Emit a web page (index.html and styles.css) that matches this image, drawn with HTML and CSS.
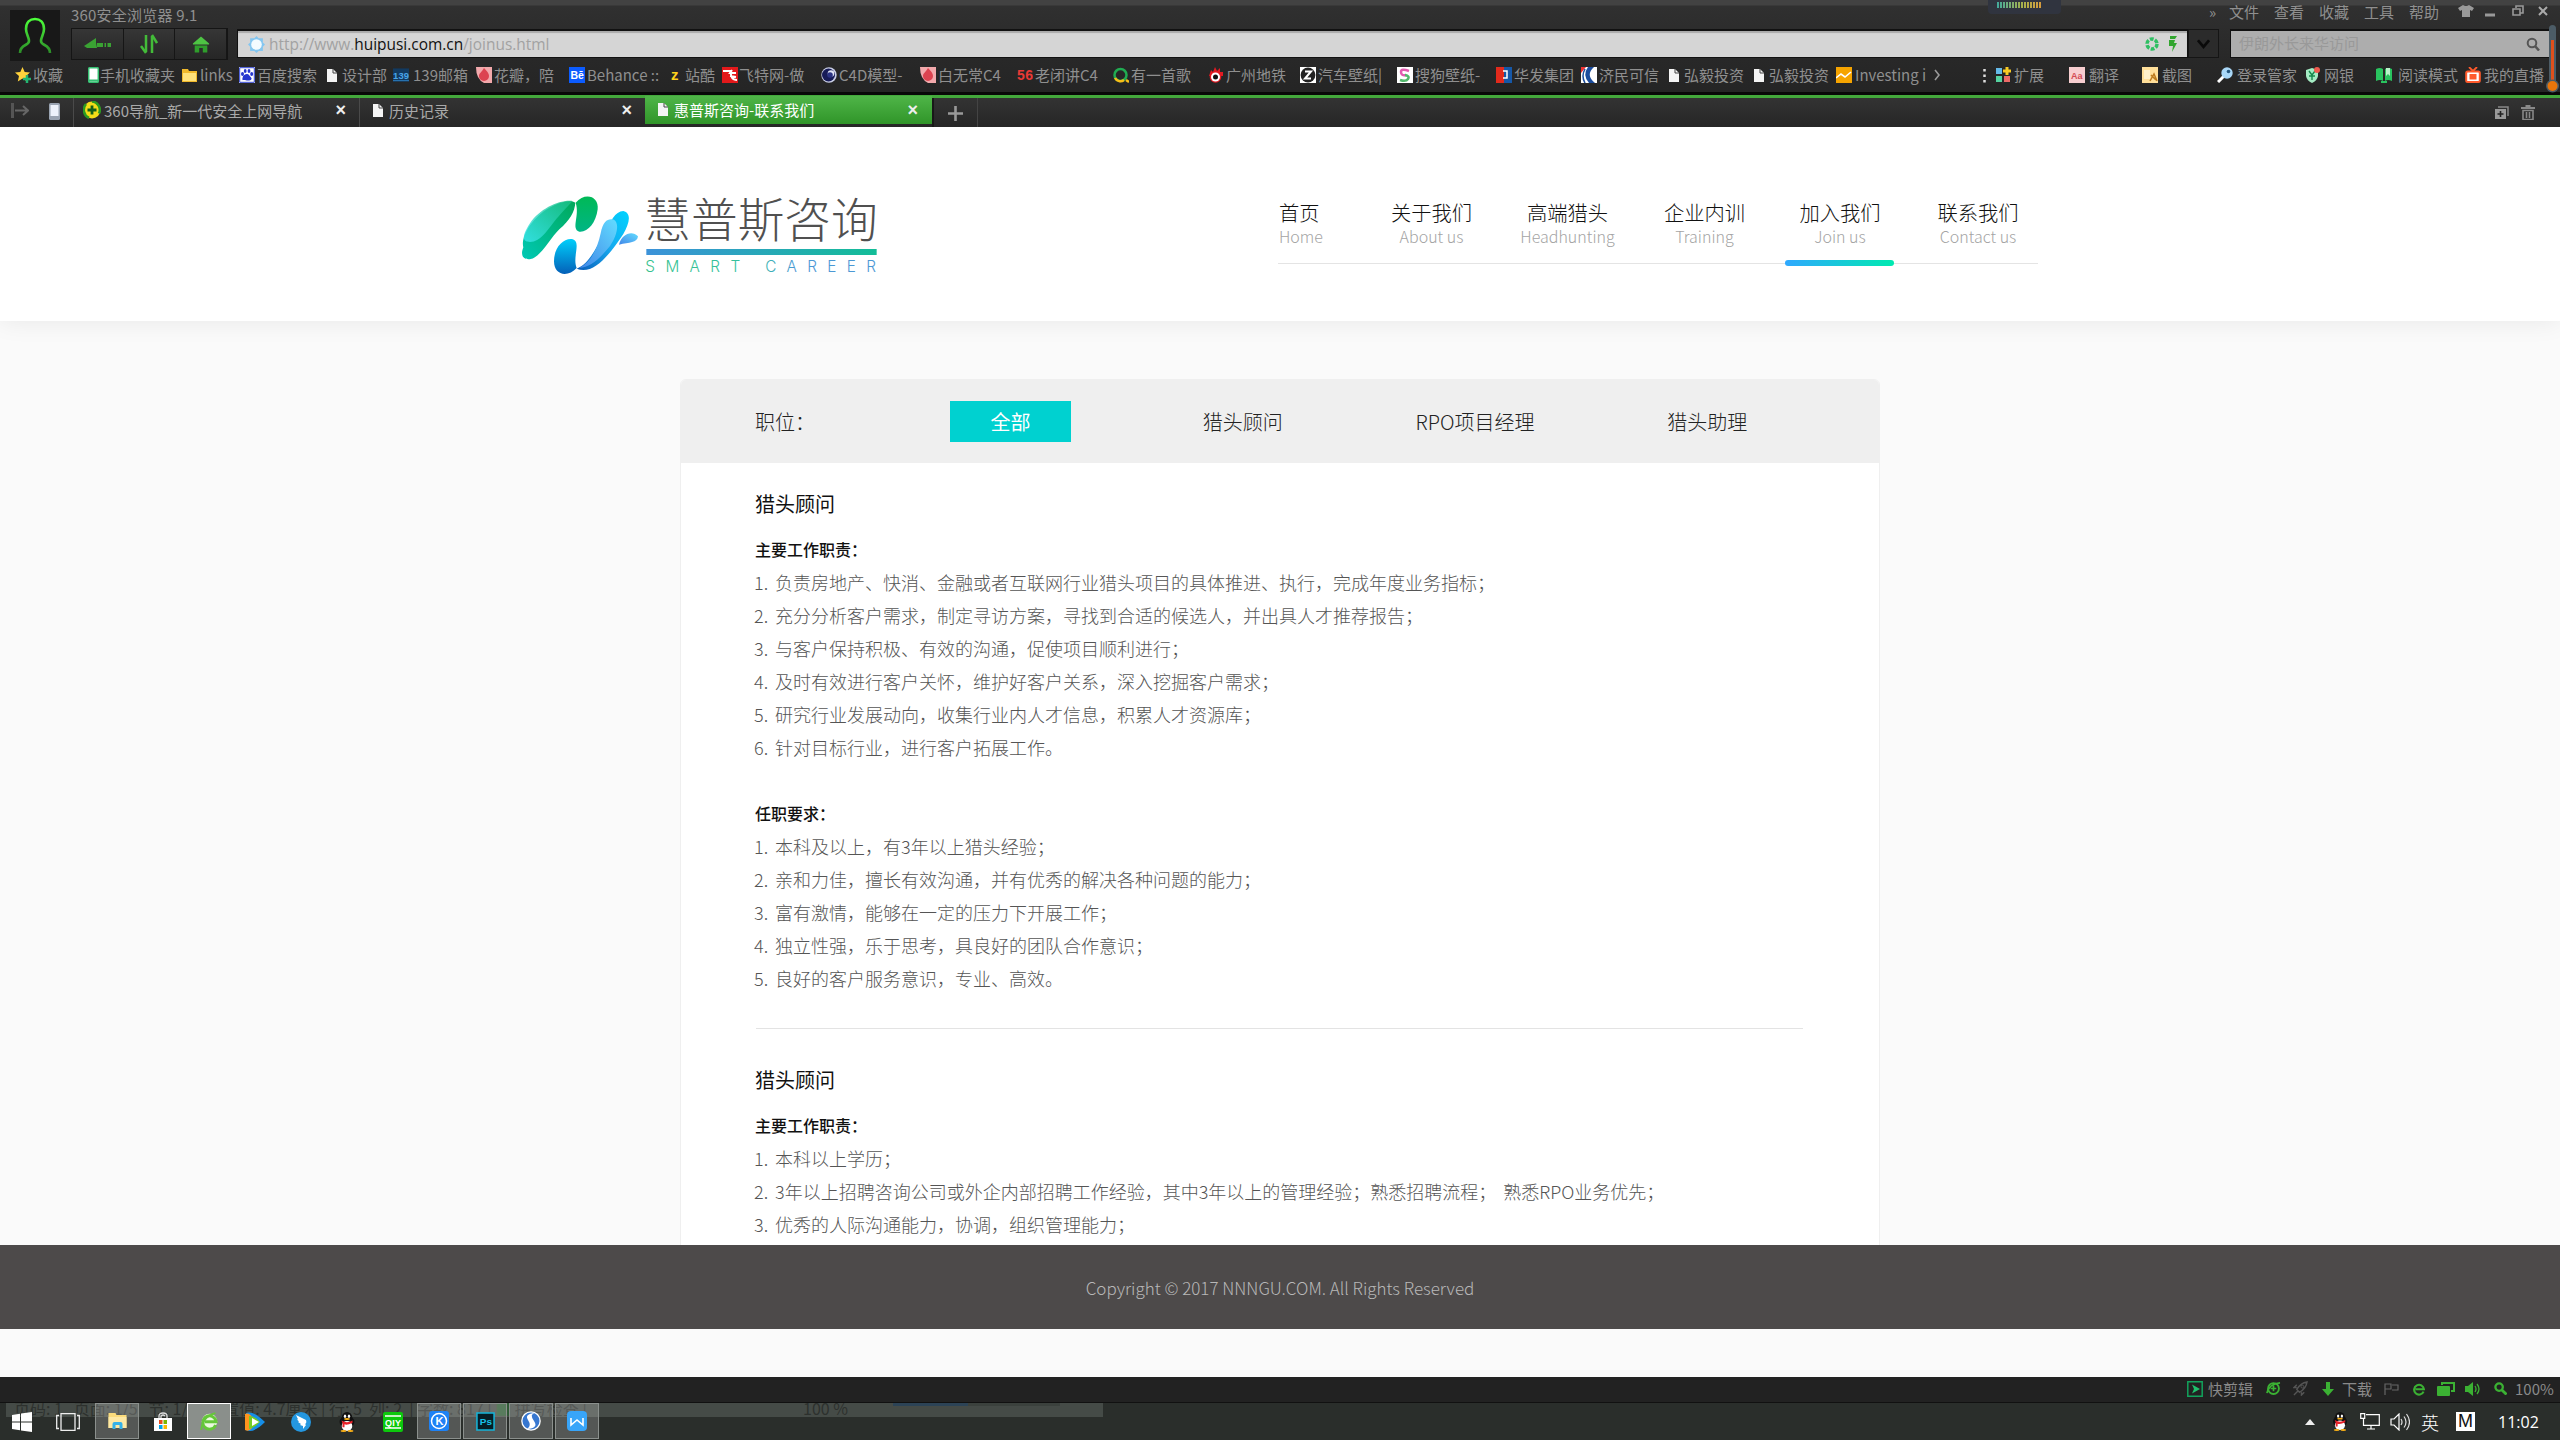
FILE: index.html
```html
<!DOCTYPE html>
<html lang="zh-CN">
<head>
<meta charset="utf-8">
<title>惠普斯咨询-联系我们</title>
<link rel="stylesheet" href="styles.css">
</head>
<body>
<svg class="defs" width="0" height="0">
  <defs>
    <symbol id="doc" viewBox="0 0 10 13"><path d="M0 0h6l4 4v9H0z" fill="#f4f4f4"/><path d="M6 0v4h4" fill="none" stroke="#444"/></symbol>
    <symbol id="qq" viewBox="0 0 16 20"><ellipse cx="8" cy="10" rx="7.4" ry="6.5" fill="#111"/><ellipse cx="8" cy="5.5" rx="5.2" ry="5.5" fill="#111"/><ellipse cx="8" cy="14" rx="5.3" ry="5" fill="#fff"/><ellipse cx="6" cy="4.3" rx="1.2" ry="1.7" fill="#fff"/><ellipse cx="10" cy="4.3" rx="1.2" ry="1.7" fill="#fff"/><ellipse cx="8" cy="7" rx="3" ry="1" fill="#fbb117"/><path d="M2.5 8.5Q8 12 13.5 8.5v2.3Q8 13.5 5.5 12.3v3H3.5v-4z" fill="#e8222a"/><ellipse cx="4.5" cy="19" rx="3" ry="1" fill="#fbb117"/><ellipse cx="11.5" cy="19" rx="3" ry="1" fill="#fbb117"/></symbol>
    <symbol id="petal" viewBox="0 0 16 16"><path d="M0 0h16v16H8Q0 12 0 0z" fill="#f2a9ac"/><path d="M8 1c4 4 5 6 5 8a5 5 0 0 1-10 0c0-3 3-4 5-8z" fill="#dc4350"/></symbol>
    <symbol id="ie" viewBox="0 0 16 16"><path d="M13.2 11A5.6 5.6 0 1 1 13.6 8.200H4" fill="none" stroke="currentColor" stroke-width="2.400"/></symbol>
    <linearGradient id="grn" x2="0" y2="1"><stop stop-color="#4cff3a"/><stop offset="1" stop-color="#2c8c28"/></linearGradient>
  </defs>
</svg>

<header class="chrome">
  <div class="chrome-top">
    <div class="avatar"><svg viewBox="0 0 50 50" width="50" height="50"><path d="M10 43c0-9 9-7 9-12 0-4-3-7-3-12 0-7 4-10 9-10s9 3 9 10c0 5-3 8-3 12 0 5 9 3 9 12" fill="none" stroke="url(#grn)" stroke-width="2.6"/></svg></div>
    <div class="chrome-rows">
      <div class="title-row">
        <span class="app-name">360安全浏览器 9.1</span>
        <div class="menu">
          <span>»</span><span>文件</span><span>查看</span><span>收藏</span><span>工具</span><span>帮助</span>
          <svg viewBox="0 0 16 12" width="16" height="12"><path d="M5 0q3 2 6 0l5 3-2 3-2-1v7H4V5L2 6 0 3z" fill="#999"/></svg>
          <svg viewBox="0 0 10 12" width="10" height="12"><path d="M0 10h10" stroke="#999" stroke-width="3"/></svg>
          <svg viewBox="0 0 12 12" width="12" height="12"><path d="M4 3V1h7v7H8M1 4h7v6H1z" fill="none" stroke="#999" stroke-width="1.6"/></svg>
          <svg viewBox="0 0 10 12" width="10" height="12"><path d="M1 2l8 8M9 2l-8 8" stroke="#aaa" stroke-width="2"/></svg>
        </div>
      </div>
      <div class="address-row">
        <div class="nav-buttons">
          <span><svg viewBox="0 0 28 16" width="28" height="16"><path d="M1 10L13 2v4.500l1 5.500H4z" fill="#3aa233"/><path d="M14 9h14" stroke="#3aa233" stroke-width="4" stroke-dasharray="6 1.500 1.500 1.500"/></svg></span>
          <span><svg viewBox="0 0 18 20" width="18" height="20"><path d="M6 1v17M12 19V2" stroke="#43bb39" stroke-width="2.500"/><path d="M1 12l5 7M12 1l5 8" stroke="#43bb39" stroke-width="2.500"/></svg></span>
          <span><svg viewBox="0 0 20 18" width="18" height="17"><path d="M10 0l9 8v1H1V8z" fill="#4ec444"/><path d="M3 10h14v8h-5v-5H8v5H3z" fill="#2f9d2c"/></svg></span>
        </div>
        <div class="address">
          <svg viewBox="0 0 16 16" width="17" height="17"><path d="M8 0l2 2h4v4l2 2-2 2v4h-4l-2 2-2-2H2v-4L0 8l2-2V2h4z" fill="#84c6f0"/><circle cx="8" cy="8" r="5" fill="#f3fbff"/></svg>
          <span class="url">http://www.<b>huipusi.com.cn</b>/joinus.html</span>
          <svg class="shutter" viewBox="0 0 14 14" width="14" height="14"><circle cx="7" cy="7" r="5" fill="none" stroke="#2fbf63" stroke-width="3.500" stroke-dasharray="3.800 1.400"/></svg>
          <svg viewBox="0 0 10 16" width="10" height="16"><path d="M2 0h7L7 3H2zM1 4h6L6 7h3L4 16l1-6H1z" fill="#31a52e"/></svg>
        </div>
        <div class="dropdown"><svg viewBox="0 0 14 10" width="13" height="10"><path d="M1 1l6 7 6-7" fill="none" stroke="#0a0a0a" stroke-width="3"/></svg></div>
        <div class="search"><span>伊朗外长来华访问</span><svg viewBox="0 0 14 14" width="14" height="14"><circle cx="6" cy="6" r="4.300" fill="none" stroke="#555" stroke-width="2"/><path d="M9 9l4 4.500" stroke="#555" stroke-width="2.500"/></svg></div>
      </div>
    </div>
  </div>

  <nav class="bookmarks">
    <a><svg viewBox="0 0 16 16"><path d="M7.500 0l2.200 5 5.300.5-4 3.500 1.200 5.500-4.700-3-4.700 3L4 9 0 5.500 5.300 5z" fill="#ffd23c"/><path d="M12 8v8M8 12h8" stroke="#22b573" stroke-width="2.500"/></svg>收藏</a>
    <a><svg class="w12" viewBox="0 0 12 16"><rect x=".7" y=".7" width="9.600" height="14.600" rx="1" fill="#fff" stroke="#35bf72" stroke-width="1.500"/><path d="M1 12.500h9v2H1z" fill="#35bf72"/></svg>手机收藏夹</a>
    <a><svg viewBox="0 0 16 16"><path d="M0 2h6l1 2h8v11H0z" fill="#f0b92c"/><path d="M1 6h13v8H1z" fill="#ffe27a"/></svg>links</a>
    <a><svg viewBox="0 0 16 16"><path d="M0 0h16v16H0z" fill="#fff"/><path d="M.7.7h14.600v14.600H.7z" fill="none" stroke="#2b3fd0"/><g fill="#2637cf"><ellipse cx="3.500" cy="7" rx="1.500" ry="2"/><ellipse cx="6.200" cy="4" rx="1.400" ry="2"/><ellipse cx="10" cy="4" rx="1.400" ry="2"/><ellipse cx="12.700" cy="7" rx="1.500" ry="2"/><path d="M8 7c2 0 2.500 2 4 3.500S12 14 8 13.500 3 14 3.500 11 6 7 8 7z"/></g></svg>百度搜索</a>
    <a><svg class="w15"><use href="#doc" width="10" height="13" y="2"/></svg>设计部</a>
    <a><svg class="w20" viewBox="0 0 17 16"><path d="M0 1h17v14H0z" fill="#123a60"/><text x="0" y="12" class="ic" font-size="10" textLength="17" fill="#4aa5e8">139</text><path d="M0 14h17" stroke="#2f7fc0"/></svg>139邮箱</a>
    <a><svg viewBox="0 0 16 16"><use href="#petal"/></svg>花瓣，陪</a>
    <a><svg viewBox="0 0 16 16"><path d="M0 0h16v16H0z" fill="#0c5cff"/><text x="1.500" y="12" class="ic" font-size="10.500" fill="#fff">Bē</text></svg>Behance ::</a>
    <a><svg class="w15" viewBox="0 0 12 16"><text x="1" y="13" class="ic" font-size="15" fill="#ffd21c">z</text></svg>站酷</a>
    <a><svg class="w17" viewBox="0 0 16 16"><path d="M0 0h16v16H0z" fill="#e3191b"/><path d="M1 4h8q-1 9 6 9M10 3l-2 3h6M8 9l6 1" fill="none" stroke="#fff" stroke-width="2"/></svg>飞特网-做</a>
    <a><svg viewBox="0 0 16 16"><circle cx="8" cy="8" r="7.700" fill="#c9cee6"/><circle cx="7.500" cy="8" r="6.500" fill="#171c58"/><circle cx="10" cy="6.500" r="3.300" fill="#dfe3f5"/><circle cx="9" cy="8" r="2.800" fill="#2b3383"/></svg>C4D模型-</a>
    <a><svg viewBox="0 0 16 16"><use href="#petal"/></svg>白无常C4</a>
    <a><svg viewBox="0 0 16 16"><text x="0" y="13" class="ic" font-size="14" textLength="16" fill="#e83a36">56</text></svg>老闭讲C4</a>
    <a><svg viewBox="0 0 16 16"><circle cx="7.500" cy="8" r="6" fill="none" stroke="#20ac52" stroke-width="2.500"/><path d="M2 11a6 6 0 0 0 9 2M13 13l3 2" fill="none" stroke="#f8be17" stroke-width="2.500"/></svg>有一首歌</a>
    <a><svg viewBox="0 0 16 16"><path d="M2 6l1-3 2 2 2-5 2 4 3-3v4l3 0v4H1z" fill="#e31a22"/><circle cx="7.500" cy="10" r="5.800" fill="#e31a22"/><circle cx="7.500" cy="10" r="4.500" fill="#fff"/><circle cx="7.500" cy="10" r="2.500" fill="#111"/></svg>广州地铁</a>
    <a><svg viewBox="0 0 16 16"><path d="M0 0h16v16H0z" fill="#fff"/><circle cx="8" cy="8" r="7.400" fill="#222"/><path d="M5 4.500h6l-6 7h6" fill="none" stroke="#fff" stroke-width="2"/></svg>汽车壁纸|</a>
    <a><svg viewBox="0 0 16 16"><path d="M0 0h16v16H0z" fill="#fff"/><path d="M12 4Q4 1 4 5t5 3" fill="none" stroke="#e35bb0" stroke-width="2.500"/><path d="M8 8q5 1 3 4t-8 1" fill="none" stroke="#52b76b" stroke-width="2.500"/></svg>搜狗壁纸-</a>
    <a><svg viewBox="0 0 16 16"><path d="M0 0h8v16H0z" fill="#e22a1c"/><path d="M8 0h8v16H8z" fill="#1658a8"/><path d="M7 4h4v7H7" stroke="#fff" stroke-width="1.500" fill="none"/></svg>华发集团</a>
    <a><svg viewBox="0 0 16 16"><path d="M0 0h16v16H0z" fill="#fff"/><path d="M13 0Q4 8 14 16H8Q1 8 7 0z" fill="#1b4c9d"/><path d="M0 0h5L0 6z" fill="#e33"/><path d="M4 2Q0 9 4 16" stroke="#1b4c9d" fill="none" stroke-width="1.500"/></svg>济民可信</a>
    <a><svg class="w15"><use href="#doc" width="10" height="13" y="2"/></svg>弘毅投资</a>
    <a><svg class="w15"><use href="#doc" width="10" height="13" y="2"/></svg>弘毅投资</a>
    <a><svg class="w19" viewBox="0 0 16 16"><path d="M0 0h16v16H0z" fill="#f6a400"/><path d="M0 11l5-4 4 3 6-5" fill="none" stroke="#fff" stroke-width="1.600"/></svg>Investing i</a>
    <a><svg viewBox="0 0 16 16"><path d="M1 3l4 5-4 5" fill="none" stroke="#999" stroke-width="1.600"/></svg></a>
    <a><svg class="w12" viewBox="0 0 12 16"><path d="M1.500 2v14" stroke="#ddd" stroke-width="2.500" stroke-dasharray="2.500 3"/></svg></a>
    <a><svg class="w19" viewBox="0 0 16 16"><path d="M1 1h6v6H1z" fill="#64b9e8"/><path d="M1 9h6v6H1z" fill="#55d2a0"/><path d="M9 9h6v6H9z" fill="#ec6a67"/><path d="M12 0v8M8 4h8" stroke="#f8ca25" stroke-width="3"/></svg>扩展</a>
    <a><svg class="w20" viewBox="0 0 16 16"><path d="M0 0h16v16H0z" fill="#f7ced0"/><text x="2" y="11.500" font-size="9" class="ic" fill="#d44c54">Aa</text></svg>翻译</a>
    <a><svg class="w20" viewBox="0 0 16 16"><path d="M0 0h16v16H0z" fill="#ffdf9a"/><path d="M2 3h6v9H2z" fill="#fff0cb"/><path d="M8 14l4-7 3 7M9 8l5 5" stroke="#bd7b1e" stroke-width="1.500" fill="none"/></svg>截图</a>
    <a><svg class="w20" viewBox="0 0 16 16"><path d="M1 15l7-7" stroke="#fff" stroke-width="3"/><circle cx="10" cy="6" r="5.700" fill="#a9d7f7"/><circle cx="11.500" cy="4.500" r="1.800" fill="#25567e"/></svg>登录管家</a>
    <a><svg class="w20" viewBox="0 0 16 16"><path d="M8 1l6 2v6q-1 5-6 7-5-2-6-7V3z" fill="#a5ecc4"/><path d="M5 4l3 4 3-4M8 8v5M5 9h6" stroke="#17894c" stroke-width="1.400" fill="none"/><circle cx="13" cy="3" r="3" fill="#ef5a4e"/></svg>网银</a>
    <a><svg class="w22" viewBox="0 0 16 16"><path d="M0 2q4-2 7 0v12q-3-2-7 0zM9 2q3-2 7 0v12q-4-2-7 0z" fill="#29c45f"/><path d="M10 1h4v8l-2-2-2 2z" fill="#b9f3c9"/><path d="M5 14h6v2H5z" fill="#29c45f"/></svg>阅读模式</a>
    <a><svg class="w19" viewBox="0 0 16 16"><path d="M4 0l4 4 4-4" stroke="#ff5a2c" stroke-width="1.800" fill="none"/><rect x="1.200" y="4.500" width="13.600" height="10.500" rx="1.500" fill="#fff" stroke="#ff5a2c" stroke-width="2"/><path d="M4.500 7h7v5.500h-7z" fill="#ff5a2c"/></svg>我的直播</a>
  </nav>

  <div class="tabs">
    <div class="tab-tools">
      <svg viewBox="0 0 18 16" width="18" height="16"><path d="M1.500 0v15" stroke="#555" stroke-width="3"/><path d="M4 7.500h12M12 3l5 4.500-5 4.500" stroke="#666" fill="none" stroke-width="2"/></svg>
      <svg viewBox="0 0 11 17" width="11" height="17"><rect width="11" height="17" rx="1.500" fill="#9aa4b2"/><path d="M1.500 2h8v11h-8z" fill="#edf2fb"/></svg>
    </div>
    <div class="tab"><svg viewBox="0 0 18 18" width="18" height="18"><circle cx="9" cy="9" r="8.500" fill="#f3dc18"/><path d="M3 3a9 9 0 0 0 3 14M9 .5a8.500 8.500 0 0 1 7 12" fill="none" stroke="#2b9a22" stroke-width="2.500"/><path d="M9 4.500v9M4.500 9h9" stroke="#145f18" stroke-width="2.800"/></svg><span class="tight">360导航_新一代安全上网导航</span><i>×</i></div>
    <div class="tab"><svg viewBox="0 0 10 13" width="10" height="13"><use href="#doc"/></svg><span>历史记录</span><i>×</i></div>
    <div class="tab active"><svg viewBox="0 0 10 13" width="10" height="13"><use href="#doc"/></svg><span>惠普斯咨询-联系我们</span><i>×</i></div>
    <div class="plus"><svg viewBox="0 0 15 15" width="15" height="15"><path d="M7.500 0v15M0 7.500h15" stroke="#999" stroke-width="2.600"/></svg></div>
    <div class="tab-right">
      <svg viewBox="0 0 14 13" width="14" height="13"><path d="M3 1h10v9" fill="none" stroke="#888" stroke-width="1.500"/><rect y="3" width="11" height="10" fill="#999"/><path d="M5.500 5v6M2.500 8h6" stroke="#222" stroke-width="1.600"/></svg>
      <svg viewBox="0 0 14 15" width="14" height="15"><path d="M0 3h14M4.500 1h5" stroke="#888" stroke-width="2"/><path d="M2 5.500h10v9H2zM5.500 7v6M8.500 7v6" stroke="#888" stroke-width="1.600" fill="none"/></svg>
    </div>
  </div>

  <div class="meter"><i></i></div>
  <svg class="thermo" viewBox="0 0 13 70" width="13" height="70"><rect x="3" width="7" height="62" rx="3.500" fill="#4c5c66"/><path d="M6.500 15v45" stroke="#e0501c" stroke-width="3"/><circle cx="6.500" cy="61" r="6.500" fill="#4c5c66"/><circle cx="6.500" cy="61" r="5" fill="#e8750a"/></svg>
</header>

<div class="page">
  <header class="site-header">
    <svg class="logo" viewBox="0 0 1260 390" width="420" height="130">
      <defs>
        <linearGradient id="g1" x1="1" x2="0" y2="1"><stop stop-color="#00a859"/><stop offset="1" stop-color="#00c9b5"/></linearGradient>
        <linearGradient id="g2" x1="1" x2="0" y2="1"><stop stop-color="#1abf83"/><stop offset="1" stop-color="#3ee6ee"/></linearGradient>
        <linearGradient id="g3" x2="0" y2="1"><stop stop-color="#00b956"/><stop offset="1" stop-color="#00b585"/></linearGradient>
        <linearGradient id="g4" x2="0" y2="1"><stop stop-color="#00cffb"/><stop offset="1" stop-color="#0460b8"/></linearGradient>
        <linearGradient id="g5" x1="1" x2="0" y2="1"><stop stop-color="#00d4ff"/><stop offset=".5" stop-color="#16a8ee"/><stop offset="1" stop-color="#0a5cb8"/></linearGradient>
        <linearGradient id="g6" x1="1" x2="0" y2="1"><stop stop-color="#62dcff"/><stop offset="1" stop-color="#4186e8"/></linearGradient>
        <linearGradient id="g7" gradientUnits="userSpaceOnUse" x1="440" x2="1130" y1="0" y2="0"><stop stop-color="#3c92d9"/><stop offset="1" stop-color="#13bd97"/></linearGradient>
        <linearGradient id="g8" gradientUnits="userSpaceOnUse" x1="440" x2="1130" y1="0" y2="0"><stop stop-color="#35c08d"/><stop offset=".45" stop-color="#35c0a0"/><stop offset=".65" stop-color="#4b98d4"/><stop offset="1" stop-color="#4b98d4"/></linearGradient>
      </defs>
      <path d="M226 98C200 82 130 110 90 166C70 195 66 218 70 232C58 262 76 270 92 267C122 262 150 205 178 178C210 150 224 125 226 98Z" fill="url(#g1)"/>
      <path d="M218 93C180 88 120 115 90 160C65 198 66 216 90 216C122 214 138 185 160 158C185 128 200 112 218 93Z" fill="url(#g2)" opacity=".8"/>
      <path d="M227 98C255 65 298 78 293 118C288 160 262 188 238 185C212 176 240 138 227 98Z" fill="url(#g3)"/>
      <path d="M230 294C205 322 162 318 162 274C162 232 190 204 216 207C246 214 216 260 230 294Z" fill="url(#g4)"/>
      <path d="M230 296C265 282 282 245 310 196C332 155 345 123 370 123C396 130 388 160 370 192C330 252 280 318 230 296Z" fill="url(#g5)"/>
      <path d="M238 294C275 275 292 235 302 190C310 150 325 145 342 149C360 160 350 200 330 228C298 268 270 292 238 294Z" fill="url(#g6)"/>
      <path d="M357 224C365 192 396 180 414 199C412 219 388 217 357 224Z" fill="url(#g6)"/>
      <text x="433" y="202" class="logo-cn" font-size="140">慧普斯咨询</text>
      <path d="M439 246h691" stroke="url(#g7)" stroke-width="18"/>
      <text x="436" y="305" class="logo-en" font-size="46" textLength="692" fill="url(#g8)">SMART CAREER</text>
    </svg>
    <nav class="site-nav">
      <a><b>首页</b><small>Home</small></a>
      <a><b>关于我们</b><small>About us</small></a>
      <a><b>高端猎头</b><small>Headhunting</small></a>
      <a><b>企业内训</b><small>Training</small></a>
      <a class="current"><b>加入我们</b><small>Join us</small></a>
      <a><b>联系我们</b><small>Contact us</small></a>
    </nav>
  </header>

  <main class="card">
    <div class="filters"><span class="label">职位：</span><a class="on">全部</a><a>猎头顾问</a><a>RPO项目经理</a><a>猎头助理</a></div>
    <section class="job">
      <h2>猎头顾问</h2>
      <h3>主要工作职责：</h3>
      <p>1. 负责房地产、快消、金融或者互联网行业猎头项目的具体推进、执行，完成年度业务指标；</p>
      <p>2. 充分分析客户需求，制定寻访方案，寻找到合适的候选人，并出具人才推荐报告；</p>
      <p>3. 与客户保持积极、有效的沟通，促使项目顺利进行；</p>
      <p>4. 及时有效进行客户关怀，维护好客户关系，深入挖掘客户需求；</p>
      <p>5. 研究行业发展动向，收集行业内人才信息，积累人才资源库；</p>
      <p>6. 针对目标行业，进行客户拓展工作。</p>
      <h3 class="gap">任职要求：</h3>
      <p>1. 本科及以上，有3年以上猎头经验；</p>
      <p>2. 亲和力佳，擅长有效沟通，并有优秀的解决各种问题的能力；</p>
      <p>3. 富有激情，能够在一定的压力下开展工作；</p>
      <p>4. 独立性强，乐于思考，具良好的团队合作意识；</p>
      <p>5. 良好的客户服务意识，专业、高效。</p>
    </section>
    <section class="job">
      <h2>猎头顾问</h2>
      <h3>主要工作职责：</h3>
      <p>1. 本科以上学历；</p>
      <p>2. 3年以上招聘咨询公司或外企内部招聘工作经验，其中3年以上的管理经验；熟悉招聘流程； 熟悉RPO业务优先；</p>
      <p>3. 优秀的人际沟通能力，协调，组织管理能力；</p>
    </section>
  </main>
</div>
<footer class="site-footer"><span>Copyright © 2017 NNNGU.COM. All Rights Reserved</span></footer>
<div class="blank"></div>

<div class="statusbar">
  <svg viewBox="0 0 16 16" width="16" height="16"><path d="M.8.8h14.400v14.400H.8z" fill="none" stroke="#12a35c" stroke-width="1.500"/><path d="M5 3.500l8 4.500-8 4.500 2-4.500z" fill="#1fc06c"/></svg>
  <span>快剪辑</span>
  <svg viewBox="0 0 16 16" width="15" height="15"><circle cx="8" cy="8" r="5.800" fill="none" stroke="#3bb133" stroke-width="2"/><path d="M8 5v6M5 8h6M1 13Q3 3 15 2" fill="none" stroke="#3bb133" stroke-width="1.800"/></svg>
  <svg viewBox="0 0 16 16" width="15" height="15"><path d="M4 9Q8 2 15 1q-1 7-8 11zM4 7H1l3-3M9 12v3l3-3M1 15l4-4" fill="none" stroke="#555" stroke-width="1.500"/><circle cx="10" cy="6" r="1.500" fill="none" stroke="#555"/></svg>
  <svg viewBox="0 0 12 14" width="12" height="14"><path d="M4 0h4v7h4l-6 7-6-7h4z" fill="#3bb133"/></svg>
  <span>下载</span>
  <svg viewBox="0 0 15 12" width="15" height="12"><path d="M1 12V1h6v5H1M8 2h6v5H8" fill="none" stroke="#666" stroke-width="1.200"/></svg>
  <svg class="ie" viewBox="0 0 16 16" width="14" height="14"><use href="#ie"/></svg>
  <svg viewBox="0 0 18 14" width="18" height="14"><path d="M5 3V1h12v8h-3" fill="none" stroke="#3bb133" stroke-width="2"/><rect y="4" width="13" height="10" rx="1" fill="#3bb133"/></svg>
  <svg viewBox="0 0 15 14" width="15" height="14"><path d="M0 4h3l5-4v14l-5-4H0z" fill="#3bb133"/><path d="M10 4q2 3 0 6M12 2q4 5 0 10" stroke="#3bb133" fill="none" stroke-width="1.300"/></svg>
  <svg viewBox="0 0 14 14" width="13" height="13"><circle cx="5.500" cy="5.500" r="4" fill="none" stroke="#3bb133" stroke-width="2.500"/><path d="M8.500 8.500l5 5" stroke="#3bb133" stroke-width="3"/></svg>
  <span>100%</span>
</div>

<div class="taskbar">
  <div class="ghost"><span>页码: 1 &nbsp; 页面: 1/5 &nbsp; 节: 1/1 &nbsp; 设置值: 4.7厘米 | 行: 5 &nbsp;列: 2 &nbsp;| 字数: 817 | <u>■</u> 拼写检查 |</span><em>100 %</em><b></b></div>
  <div class="apps">
    <span class="start"><svg viewBox="0 0 20 20" width="20" height="20"><path d="M0 3l8-1.200v7.700H0zM9 1.600L20 0v9.500H9zM0 10.500h8v7.700L0 17zM9 10.500h11V20L9 18.400z" fill="#fff"/></svg></span>
    <span><svg viewBox="0 0 24 18" width="24" height="18"><path d="M5 .7h14v16.600H5zM3 2.500H.7v13H3M21 2.500h2.300v13H21" fill="none" stroke="#eee" stroke-width="1.300"/></svg></span>
    <span class="open"><svg viewBox="0 0 18 18" width="19" height="18"><path d="M0 1h7l1 2h10v13H0z" fill="#fadb7c"/><path d="M0 5h18v11H0z" fill="#fde8a4"/><path d="M4 17v-5q0-2 2-2h6q2 0 2 2v5h-3v-4H7v4z" fill="#35b1e8"/></svg></span>
    <span><svg viewBox="0 0 20 20" width="20" height="20"><path d="M6 7V4q0-3 4-3t4 3v3M8 6V4q2-2 4 0" fill="none" stroke="#ddd" stroke-width="1.300"/><path d="M1 6h18v13H1z" fill="#fff"/><path d="M6 8h3.500v4H6z" fill="#e84d1c"/><path d="M10.500 8H14v4h-3.500z" fill="#7db700"/><path d="M6 13h3.500v4H6z" fill="#00a2e8"/><path d="M10.500 13H14v4h-3.500z" fill="#fdb900"/></svg></span>
    <span class="open hot"><svg class="e" viewBox="0 0 16 16" width="19" height="19"><circle cx="8" cy="8" r="6.500" fill="#eaf8df"/><use href="#ie"/><path d="M1 15Q2 4 13 1" fill="none" stroke="#65c73a" stroke-width="1.500"/></svg></span>
    <span><svg viewBox="0 0 20 20" width="20" height="20"><path d="M1 1q7-3 19 9Q8 22 1 18z" fill="#168fe8"/><path d="M0 2q4-2 7 3v11q-3 4-7 2z" fill="#ff941e"/><path d="M4 4q6 0 11 6-6 6-11 7z" fill="#74cc28"/><path d="M7 6l7 4-7 4z" fill="#fff"/></svg></span>
    <span><svg viewBox="0 0 20 20" width="20" height="20"><circle cx="10" cy="10" r="10" fill="#2497e0"/><path d="M5 3l10 5q1 3-1 4l1 1-3 4v-3l-3-1 1-1-3-2 1-.5-2-2 1-.3z" fill="#fff"/></svg></span>
    <span><svg viewBox="0 0 16 20" width="16" height="20"><use href="#qq"/></svg></span>
    <span><svg viewBox="0 0 20 20" width="20" height="20"><rect width="20" height="20" rx="2" fill="#0cc80c"/><path d="M2 4h16M2 16h16" stroke="#fff" stroke-width="1.300"/><text x="2" y="13.500" class="ic" font-size="9" textLength="16" fill="#fff">QIY</text></svg></span>
    <span class="open"><svg viewBox="0 0 20 20" width="20" height="20"><rect width="20" height="20" rx="3" fill="#1e82f5"/><circle cx="10" cy="10" r="7.500" fill="none" stroke="#fff" stroke-width="1.500"/><text x="6.500" y="14" class="ic" font-size="11" fill="#fff">K</text></svg></span>
    <span class="open"><svg viewBox="0 0 20 20" width="19" height="19"><path d="M1 1h18v18H1z" fill="#061e26" stroke="#14b5da" stroke-width="1.600"/><text x="4" y="14" class="ic" font-size="10.500" fill="#17c1ea">Ps</text></svg></span>
    <span class="open"><svg viewBox="0 0 20 20" width="20" height="20"><circle cx="10" cy="10" r="9.800" fill="#fff"/><circle cx="10" cy="10" r="8.500" fill="#3777d0"/><path d="M14 2Q3 3 7 9t-1 9Q18 17 13 10T14 2z" fill="#fff"/></svg></span>
    <span class="open"><svg viewBox="0 0 20 20" width="20" height="20"><rect width="20" height="20" rx="4" fill="#38a5f9"/><path d="M4 7v7l6-5 6 5V7" fill="none" stroke="#fff" stroke-width="1.600"/></svg></span>
  </div>
  <div class="tray">
    <svg viewBox="0 0 10 6" width="10" height="6"><path d="M0 6l5-6 5 6z" fill="#eee"/></svg>
    <svg viewBox="0 0 16 20" width="16" height="19"><use href="#qq"/></svg>
    <svg viewBox="0 0 20 17" width="20" height="17"><path d="M6 1.700h13.300v10.600H3.500V6M11 12v4M7 16h8M.7.700h4v4.600h-4z" fill="none" stroke="#fff" stroke-width="1.200"/></svg>
    <svg viewBox="0 0 20 18" width="20" height="18"><path d="M1 6h3l5-5v16l-5-5H1z" fill="none" stroke="#fff" stroke-width="1.200"/><path d="M11 6q2 3 0 6M14 3.500q4 5.500 0 11M16.500 1q6 8 0 16" fill="none" stroke="#ddd" stroke-width="1.200"/></svg>
    <span class="ime">英</span>
    <span class="m">M</span>
    <span class="clock">11:02</span>
  </div>
</div>
</body>
</html>
```
FILE: styles.css
```css
* { box-sizing: border-box; }
html, body { margin: 0; height: 1440px; overflow: hidden; }
body {
  display: flex;
  flex-direction: column;
  width: 2560px;
  background: #fafafa;
  font-family: "Noto Sans CJK SC", sans-serif;
}
svg { display: block; flex: none; }
.defs { position: absolute; }
.ic { font-family: "Liberation Sans", sans-serif; font-weight: 700; }

/* browser window */
.chrome {
  position: relative;
  flex: none;
  height: 127px;
  display: flex;
  flex-direction: column;
  background: linear-gradient(#424242 0 5px, #303030 6px, #282828 60px, #252525 90px);
  color: #8f8f8f;
  font-size: 15px;
}
.chrome-top { display: flex; height: 62px; padding: 0 9px 0 10px; }
.avatar { width: 50px; height: 51px; margin: 10px 11px 0 0; background: #181818; }
.chrome-rows { flex: 1; display: flex; flex-direction: column; }
.title-row { display: flex; justify-content: space-between; height: 28px; line-height: 29px; }
.app-name { letter-spacing: .2px; }
.menu {
  display: grid;
  grid-template-columns: 20px 45px 45px 45px 45px 49px 27px 27px 26px 13px;
  line-height: 24px;
}
.menu svg { margin-top: 5px; }
.address-row { display: flex; height: 32px; }
.nav-buttons {
  display: flex;
  width: 157px;
  border: 1px solid #151515;
  background: linear-gradient(#363636, #262626);
}
.nav-buttons span { flex: 1; display: flex; align-items: center; justify-content: center; border-right: 1px solid #161616; }
.address {
  flex: 1;
  display: flex;
  align-items: center;
  margin: 1px 0 2px 9px;
  padding: 0 9px 0 10px;
  border: 1px solid #111;
  border-top-width: 2px;
  background: #d5d5d5;
  box-shadow: inset 0 2px 1px #aaa;
}
.url { margin-left: 4px; font: 15.45px "Open Sans", sans-serif; color: #a2a2a2; }
.url b { font-weight: 400; color: #111; }
.shutter { margin: 0 9px 0 auto; }
.dropdown { width: 31px; margin: 1px 0 2px; display: flex; align-items: center; justify-content: center; border: 1px solid #151515; background: #2b2b2b; }
.search {
  display: flex;
  align-items: center;
  justify-content: space-between;
  width: 321px;
  margin: 1px 0 2px 11px;
  padding: 0 10px 0 8px;
  border: 1px solid #111;
  border-top-width: 2px;
  background: #adadad;
  color: #999;
}
.search span { line-height: 22px; padding-bottom: 2px; }

.bookmarks {
  display: grid;
  grid-template-columns: 73px 94px 57px 88px 66px 83px 93px 101px 52px 99px 99px 97px 96px 95px 92px 97px 99px 85px 88px 85px 82px 98px 49px 12px 74px 73px 75px 87px 72px 89px 95px;
  height: 33px;
  padding-left: 15px;
  border-bottom: 3px solid #080808;
}
.bookmarks a { display: flex; align-items: center; white-space: nowrap; padding-bottom: 5px; }
.bookmarks svg { width: 16px; height: 16px; margin-right: 2px; }
.bookmarks .w12 { width: 12px; margin-right: 0; }
.bookmarks .w15 { width: 12px; margin-right: 3px; }
.bookmarks .w17 { margin-right: 1px; }
.bookmarks .w19 { margin-right: 3px; }
.bookmarks .w20 { margin-right: 4px; }
.bookmarks .w22 { margin-right: 6px; }

.tabs {
  display: flex;
  height: 32px;
  border-top: 3px solid #43a83b;
  background: linear-gradient(#333, #262626);
  color: #a9a9a9;
}
.tab-tools { display: flex; align-items: center; width: 73px; padding: 0 0 3px 11px; gap: 20px; }
.tab {
  display: flex;
  align-items: center;
  width: 286px;
  padding: 0 13px 5px;
  border-left: 1px solid #4a4a4a;
}
.tab svg { margin-right: 6px; }
.tab .tight { margin-left: -3px; }
.tab:nth-child(2) { padding-left: 9px; }
.tab i { margin-left: auto; font: 700 18px/20px "Liberation Sans", sans-serif; color: #eee; }
.tab.active { width: 287px; height: 28px; margin-top: -2px; padding: 0 14px 1px 13px; border: 0; background: linear-gradient(#4fb548, #309529); color: #fff; }
.plus { width: 46px; display: flex; align-items: center; justify-content: center; padding-top: 2px; border-right: 1px solid #444; border-left: 2px solid #181818; }
.tab-right { display: flex; align-items: center; gap: 12px; margin-left: auto; padding-right: 25px; }
.meter {
  position: absolute;
  left: 1988px;
  top: 0;
  width: 73px;
  height: 14px;
  padding: 2px 8px;
  border-radius: 0 0 4px 4px;
  background: #30343f;
}
.meter i {
  display: block;
  width: 45px;
  height: 6px;
  background: repeating-linear-gradient(90deg, #30343f 0 1px, transparent 1px 3px), linear-gradient(90deg, #3fa9a0, #a8b04a 60%, #d59a3e);
}
.thermo { position: absolute; left: 2546px; top: 25px; }

/* web page */
.page { height: 1118px; flex: none; overflow: hidden; display: flex; flex-direction: column; align-items: center; }
.site-header {
  width: 100%;
  height: 194px;
  flex: none;
  display: flex;
  justify-content: space-between;
  padding: 43px 522px 0 500px;
  background: #fff;
  box-shadow: 0 0 24px rgba(0, 0, 0, .08);
}
.logo-cn { font-weight: 300; fill: #505050; font-family: "Noto Sans CJK SC", sans-serif; }
.logo-en { font-family: Inter, "Liberation Sans", sans-serif; font-weight: 300; }
.site-nav {
  display: grid;
  grid-template-columns: 85px 137px 135px 139px 132px 132px;
  width: 760px;
  height: 94px;
  border-bottom: 1px solid #e4e4e4;
}
.site-nav a { position: relative; display: flex; flex-direction: column; align-items: center; padding-top: 30px; white-space: nowrap; }
.site-nav a:first-child { align-items: flex-start; padding-left: 1px; }
.site-nav a:last-child { padding-left: 12px; }
.site-nav b { font-weight: 300; font-size: 20.3px; line-height: 24px; color: #111; }
.site-nav small { font-weight: 300; font-size: 16px; line-height: 25px; color: #a4a4a4; }
.site-nav .current::after {
  content: "";
  position: absolute;
  left: 11px;
  bottom: -3px;
  width: 109px;
  height: 6px;
  border-radius: 3px;
  background: linear-gradient(90deg, #2fa8ff, #00eab0);
}

.card { width: 1200px; flex: none; margin-top: 58px; border: 1px solid #efefef; border-radius: 6px; background: #fff; }
.filters {
  display: flex;
  align-items: center;
  height: 83px;
  padding-left: 74px;
  border-radius: 5px 5px 0 0;
  background: #efefef;
  font-size: 20px;
  font-weight: 300;
  color: #222;
}
.filters .label { width: 196px; }
.filters a { width: 122px; margin-right: 111px; line-height: 41px; text-align: center; white-space: nowrap; }
.filters .on { background: #00d1d0; color: #fff; font-weight: 400; }
.job { margin: 0 76px 0 75px; height: 566px; padding-top: 26px; border-bottom: 1px solid #e3e3e3; }
.job + .job { padding-top: 36px; }
.job h2 { margin: 0 0 0 -1px; font-size: 20px; font-weight: 400; line-height: 30px; color: #111; }
.job h3 { margin: 14px 0 0 -1px; font-size: 16px; font-weight: 500; line-height: 33px; color: #111; }
.job h3.gap { margin-top: 33px; }
.job p { margin: 0 0 0 -2px; font-size: 18px; font-weight: 300; line-height: 33px; color: #555; white-space: nowrap; word-spacing: 3px; }
.site-footer {
  flex: none;
  height: 84px;
  display: flex;
  align-items: center;
  justify-content: center;
  background: #4d4a4a;
  color: #b8b8b8;
  font-size: 17px;
  font-weight: 300;
}
.blank { flex: none; height: 48px; background: #fafafa; }

/* desktop */
.statusbar {
  flex: none;
  display: grid;
  grid-template-columns: 21px 58px 27px 29px 20px 42px 28px 25px 28px 29px 21px 45px;
  align-items: center;
  height: 25px;
  padding: 0 0 2px 2187px;
  background: #222;
  color: #8a8a8a;
  font-size: 15px;
  line-height: 22px;
}
.statusbar .ie { color: #3bb133; }
.taskbar { position: relative; flex: none; display: flex; justify-content: space-between; height: 38px; border-top: 1px solid #111; background: #2a2e2b; }
.ghost {
  position: absolute;
  left: 6px;
  top: 0;
  width: 1097px;
  height: 14px;
  display: grid;
  grid-template-columns: 789px 90px 167px;
  padding-left: 8px;
  background: #454b47;
  color: #2d312e;
  font-size: 16px;
  line-height: 10px;
  white-space: nowrap;
  clip-path: inset(0);
}
.ghost u { color: #2f5a35; text-decoration: none; }
.ghost em { font-style: normal; }
.ghost b { height: 3px; background: linear-gradient(90deg, #2c4356 45%, #3b413d 45%); }
.apps { position: relative; display: flex; gap: 2px; padding-left: 3px; }
.apps span { width: 44px; height: 37px; display: flex; align-items: center; justify-content: center; }
.apps .start { padding-right: 6px; }
.apps .start + span { padding-right: 6px; }
.apps .open { height: 36px; border: 1px solid #8b908d; background: rgba(255, 255, 255, .2); }
.apps .hot { border-color: #fff; background: #8a8f8b; }
.e { color: #65c73a; }
.tray { display: grid; grid-template-columns: 27px 28px 30px 31px 35px 42px 62px; align-items: center; color: #fff; }
.ime { font-size: 18px; font-weight: 300; line-height: 24px; }
.m { width: 19px; height: 19px; background: #fff; color: #111; font: 18px/19px "Liberation Sans", sans-serif; text-align: center; }
.clock { font: 16px "Open Sans", sans-serif; }
```
